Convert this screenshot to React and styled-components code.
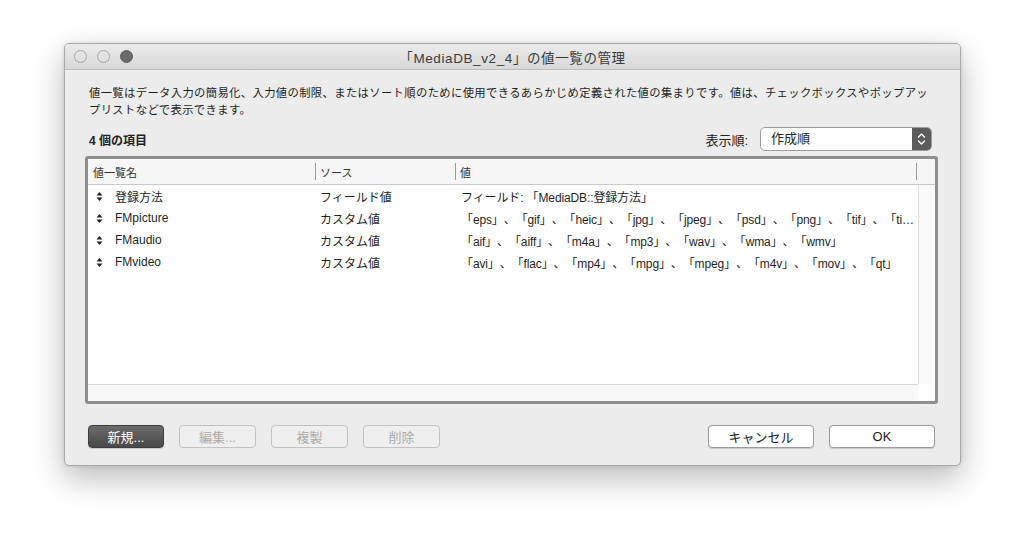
import React from "react"
import styled, { createGlobalStyle } from "styled-components"

const GlobalStyle = createGlobalStyle`
  html, body {
    margin: 0;
    padding: 0;
    background: #ffffff;
  }
  body {
    font-family: "Liberation Sans", "Noto Sans CJK JP", sans-serif;
    color: #222;
    text-spacing-trim: space-all;
  }
`

const Page = styled.div`
  width: 1024px;
  height: 551px;
  padding: 43px 0 0 64px;
  box-sizing: border-box;
`

const Window = styled.div`
  width: 897px;
  height: 423px;
  box-sizing: border-box;
  background: #ececec;
  border: 1px solid #a9a9a9;
  border-radius: 5px;
  box-shadow: 0 12px 32px rgba(0, 0, 0, 0.28), 0 0 4px rgba(0, 0, 0, 0.12);
  display: flex;
  flex-direction: column;
  overflow: hidden;
`

const TitleBar = styled.div`
  height: 25px;
  flex-shrink: 0;
  display: flex;
  align-items: center;
  position: relative;
  background: linear-gradient(#ebebeb, #d8d8d8);
  border-bottom: 1px solid #bdbdbd;
  padding-left: 9px;
`

const Lights = styled.div`
  display: flex;
  gap: 10px;
`

const Light = styled.span`
  width: 11px;
  height: 11px;
  border-radius: 50%;
  border: 1px solid ${(p) => (p.$filled ? "#5f5f5f" : "#a6a6a6")};
  background: ${(p) => (p.$filled ? "#6b6b6b" : "transparent")};
`

const Title = styled.div`
  position: absolute;
  left: 0;
  right: 0;
  text-align: center;
  font-size: 13.5px;
  letter-spacing: 0.6px;
  color: #3c3c3c;
  pointer-events: none;
`

const Body = styled.div`
  flex: 1;
  display: flex;
  flex-direction: column;
  padding: 15px 22px 17px 20px;
`

const Description = styled.p`
  margin: 0 0 0 4px;
  font-size: 11.3px;
  line-height: 17px;
  letter-spacing: 0.38px;
  color: #1e1e1e;
`

const InfoRow = styled.div`
  display: flex;
  align-items: center;
  height: 24px;
  margin-top: 8px;
  padding-left: 4px;
`

const Count = styled.div`
  flex: 1;
  font-size: 12px;
  font-weight: 700;
  color: #222;
`

const SortLabel = styled.span`
  font-size: 13px;
  color: #222;
  margin-right: 12px;
`

const Select = styled.div`
  width: 172px;
  height: 24px;
  box-sizing: border-box;
  display: flex;
  border: 1px solid #9c9c9c;
  border-radius: 5px;
  background: #fff;
  overflow: hidden;
  margin-right: 6px;
`

const SelectText = styled.span`
  flex: 1;
  padding-left: 10px;
  font-size: 13px;
  line-height: 22px;
  color: #222;
`

const Stepper = styled.span`
  width: 19px;
  background: #5c5c5c;
  display: flex;
  align-items: center;
  justify-content: center;
`

const TableFrame = styled.div`
  margin-top: 5px;
  height: 248px;
  box-sizing: border-box;
  border: 3px solid #8e8e8e;
  border-radius: 3px;
  background: #fff;
  display: flex;
  flex-direction: column;
`

const HeaderRow = styled.div`
  display: grid;
  grid-template-columns: 228px 140px 461px 1fr;
  height: 26px;
  flex-shrink: 0;
  background: #f6f6f6;
  border-bottom: 1px solid #c9c9c9;
  box-sizing: border-box;
`

const HeaderCell = styled.div`
  display: flex;
  align-items: center;
  padding-left: ${(p) => p.$pad || 4}px;
  font-size: 11px;
  color: #333;
  border-right: ${(p) => (p.$last ? "none" : "1px solid #9a9a9a")};
  margin: 4px 0;
`

const Middle = styled.div`
  flex: 1;
  display: flex;
  min-height: 0;
`

const Rows = styled.div`
  flex: 1;
  display: flex;
  flex-direction: column;
`

const VScroll = styled.div`
  width: 16px;
  background: #fafafa;
  border-left: 1px solid #e2e2e2;
`

const Bottom = styled.div`
  display: flex;
  height: 17px;
  flex-shrink: 0;
`

const HScroll = styled.div`
  flex: 1;
  background: #f8f8f8;
  border-top: 1px solid #d8d8d8;
`

const Corner = styled.div`
  width: 17px;
  background: #fff;
`

const Row = styled.div`
  display: grid;
  grid-template-columns: 228px 140px 461px;
  height: 22px;
  align-items: center;
  font-size: 12px;
  color: #1f1f1f;
`

const NameCell = styled.div`
  display: flex;
  align-items: center;
  padding-left: 8px;
`

const Handle = styled.svg`
  width: 7px;
  height: 9px;
  margin-right: 12px;
`

const Cell = styled.div`
  padding-left: ${(p) => p.$pad || 4}px;
  letter-spacing: ${(p) => (p.$tight ? "-0.12px" : "normal")};
  white-space: nowrap;
  overflow: hidden;
`

const ButtonBar = styled.div`
  display: flex;
  gap: 15px;
  margin-top: 21px;
  padding: 0 3px;
`

const Spacer = styled.div`
  flex: 1;
`

const Button = styled.button`
  height: 23px;
  width: ${(p) => p.$w || 77}px;
  box-sizing: border-box;
  border-radius: 4px;
  font-family: inherit;
  font-size: 13px;
  padding: 0;
  border: 1px solid ${(p) => (p.$primary ? "#3d3d3d" : p.disabled ? "#c2c2c2" : "#9b9b9b")};
  background: ${(p) => (p.$primary ? "linear-gradient(#6b6b6b, #484848)" : p.disabled ? "#efefef" : "#fff")};
  color: ${(p) => (p.$primary ? "#fff" : p.disabled ? "#ababab" : "#222")};
  box-shadow: ${(p) => (p.disabled ? "none" : "0 0.5px 1px rgba(0,0,0,0.15)")};
`

// values as the list shows them (the long one is already cut by the column)
const lists = [
  { name: "登録方法", source: "フィールド値", value: "フィールド: 「MediaDB::登録方法」" },
  { name: "FMpicture", source: "カスタム値", value: "「eps」、「gif」、「heic」、「jpg」、「jpeg」、「psd」、「png」、「tif」、「ti…" },
  { name: "FMaudio", source: "カスタム値", value: "「aif」、「aiff」、「m4a」、「mp3」、「wav」、「wma」、「wmv」" },
  { name: "FMvideo", source: "カスタム値", value: "「avi」、「flac」、「mp4」、「mpg」、「mpeg」、「m4v」、「mov」、「qt」" },
]

const DragHandle = () => (
  <Handle viewBox="0 0 7 9">
    <path d="M3.5 0 L6.5 3.6 L0.5 3.6 Z" fill="#222" />
    <path d="M3.5 9 L6.5 5.4 L0.5 5.4 Z" fill="#222" />
  </Handle>
)

const App = () => {
  return (
    <Page>
      <GlobalStyle />
      <Window>
        <TitleBar>
          <Lights>
            <Light />
            <Light />
            <Light $filled />
          </Lights>
          <Title>「MediaDB_v2_4」の値一覧の管理</Title>
        </TitleBar>
        <Body>
          <Description>
            値一覧はデータ入力の簡易化、入力値の制限、またはソート順のために使用できるあらかじめ定義された値の集まりです。値は、チェックボックスやポップアッ<br />
            プリストなどで表示できます。
          </Description>
          <InfoRow>
            <Count>4 個の項目</Count>
            <SortLabel>表示順:</SortLabel>
            <Select>
              <SelectText>作成順</SelectText>
              <Stepper>
                <svg width="9" height="14" viewBox="0 0 9 14">
                  <path d="M1.5 5 L4.5 2 L7.5 5" fill="none" stroke="#fff" strokeWidth="1.4" strokeLinecap="round" strokeLinejoin="round" />
                  <path d="M1.5 9 L4.5 12 L7.5 9" fill="none" stroke="#fff" strokeWidth="1.4" strokeLinecap="round" strokeLinejoin="round" />
                </svg>
              </Stepper>
            </Select>
          </InfoRow>
          <TableFrame>
            <HeaderRow>
              <HeaderCell $pad={5}>値一覧名</HeaderCell>
              <HeaderCell>ソース</HeaderCell>
              <HeaderCell>値</HeaderCell>
              <HeaderCell $last />
            </HeaderRow>
            <Middle>
              <Rows>
                {lists.map((l) => (
                  <Row key={l.name}>
                    <NameCell>
                      <DragHandle />
                      <span>{l.name}</span>
                    </NameCell>
                    <Cell>{l.source}</Cell>
                    <Cell $pad={5} $tight>{l.value}</Cell>
                  </Row>
                ))}
              </Rows>
              <VScroll />
            </Middle>
            <Bottom>
              <HScroll />
              <Corner />
            </Bottom>
          </TableFrame>
          <ButtonBar>
            <Button $primary $w={76}>新規...</Button>
            <Button disabled>編集...</Button>
            <Button disabled>複製</Button>
            <Button disabled>削除</Button>
            <Spacer />
            <Button $w={106}>キャンセル</Button>
            <Button $w={106}>OK</Button>
          </ButtonBar>
        </Body>
      </Window>
    </Page>
  )
}

export default App
